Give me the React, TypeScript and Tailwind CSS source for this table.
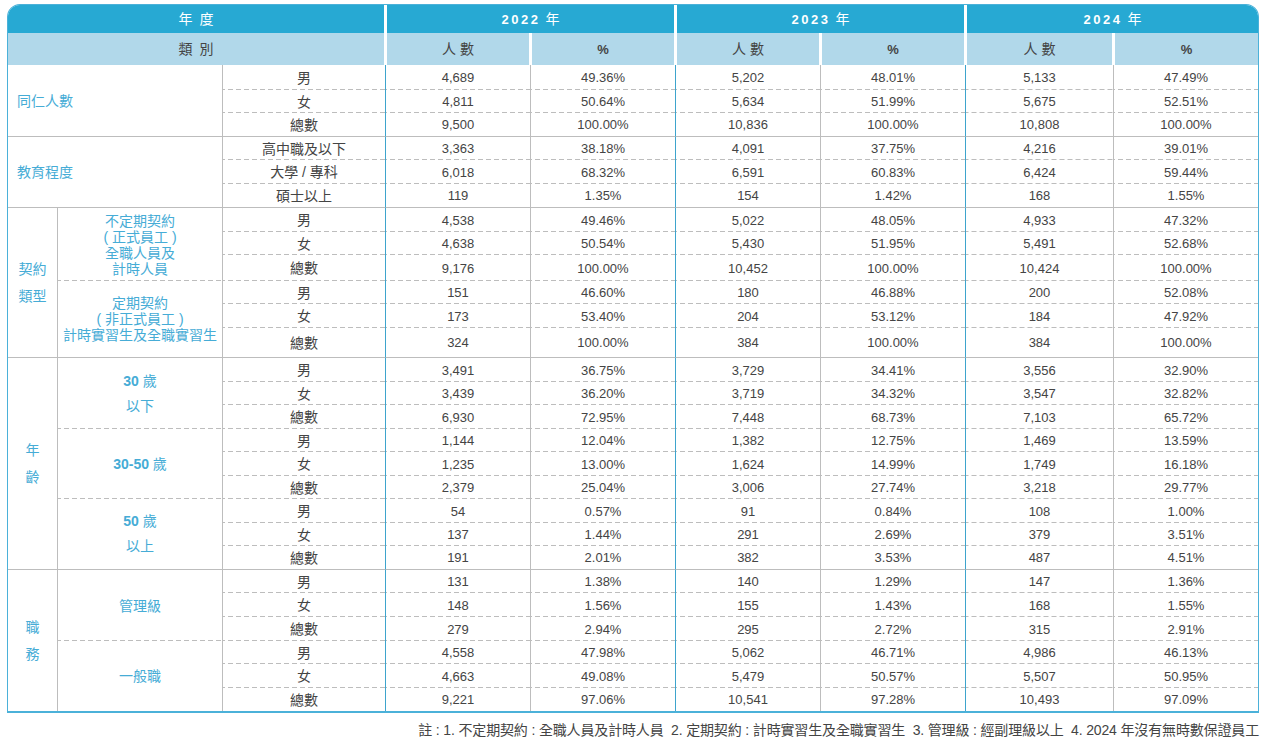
import React from 'react';

type Row = [string, string, string, string, string, string, string];
interface Block { label?: React.ReactNode; rows: Row[] }
interface Section { label: React.ReactNode; wide?: boolean; blocks: Block[] }

const sections: Section[] = [
  {
    label: '同仁人數',
    wide: true,
    blocks: [
      {
        rows: [
          ['男', '4,689', '49.36%', '5,202', '48.01%', '5,133', '47.49%'],
          ['女', '4,811', '50.64%', '5,634', '51.99%', '5,675', '52.51%'],
          ['總數', '9,500', '100.00%', '10,836', '100.00%', '10,808', '100.00%'],
        ],
      },
    ],
  },
  {
    label: '教育程度',
    wide: true,
    blocks: [
      {
        rows: [
          ['高中職及以下', '3,363', '38.18%', '4,091', '37.75%', '4,216', '39.01%'],
          ['大學 / 專科', '6,018', '68.32%', '6,591', '60.83%', '6,424', '59.44%'],
          ['碩士以上', '119', '1.35%', '154', '1.42%', '168', '1.55%'],
        ],
      },
    ],
  },
  {
    label: (
      <>
        契約
        <br />
        類型
      </>
    ),
    blocks: [
      {
        label: (
          <div className="leading-[16px]">
            不定期契約
            <br />( 正式員工 )
            <br />
            全職人員及
            <br />
            計時人員
          </div>
        ),
        rows: [
          ['男', '4,538', '49.46%', '5,022', '48.05%', '4,933', '47.32%'],
          ['女', '4,638', '50.54%', '5,430', '51.95%', '5,491', '52.68%'],
          ['總數', '9,176', '100.00%', '10,452', '100.00%', '10,424', '100.00%'],
        ],
      },
      {
        label: (
          <div className="leading-[16px]">
            定期契約
            <br />( 非正式員工 )
            <br />
            計時實習生及全職實習生
          </div>
        ),
        rows: [
          ['男', '151', '46.60%', '180', '46.88%', '200', '52.08%'],
          ['女', '173', '53.40%', '204', '53.12%', '184', '47.92%'],
          ['總數', '324', '100.00%', '384', '100.00%', '384', '100.00%'],
        ],
      },
    ],
  },
  {
    label: (
      <>
        年
        <br />
        齡
      </>
    ),
    blocks: [
      {
        label: (
          <div className="leading-[25px]">
            <span className="font-bold">30</span> 歲
            <br />
            以下
          </div>
        ),
        rows: [
          ['男', '3,491', '36.75%', '3,729', '34.41%', '3,556', '32.90%'],
          ['女', '3,439', '36.20%', '3,719', '34.32%', '3,547', '32.82%'],
          ['總數', '6,930', '72.95%', '7,448', '68.73%', '7,103', '65.72%'],
        ],
      },
      {
        label: (
          <div>
            <span className="font-bold">30-50</span> 歲
          </div>
        ),
        rows: [
          ['男', '1,144', '12.04%', '1,382', '12.75%', '1,469', '13.59%'],
          ['女', '1,235', '13.00%', '1,624', '14.99%', '1,749', '16.18%'],
          ['總數', '2,379', '25.04%', '3,006', '27.74%', '3,218', '29.77%'],
        ],
      },
      {
        label: (
          <div className="leading-[25px]">
            <span className="font-bold">50</span> 歲
            <br />
            以上
          </div>
        ),
        rows: [
          ['男', '54', '0.57%', '91', '0.84%', '108', '1.00%'],
          ['女', '137', '1.44%', '291', '2.69%', '379', '3.51%'],
          ['總數', '191', '2.01%', '382', '3.53%', '487', '4.51%'],
        ],
      },
    ],
  },
  {
    label: (
      <>
        職
        <br />
        務
      </>
    ),
    blocks: [
      {
        label: '管理級',
        rows: [
          ['男', '131', '1.38%', '140', '1.29%', '147', '1.36%'],
          ['女', '148', '1.56%', '155', '1.43%', '168', '1.55%'],
          ['總數', '279', '2.94%', '295', '2.72%', '315', '2.91%'],
        ],
      },
      {
        label: '一般職',
        rows: [
          ['男', '4,558', '47.98%', '5,062', '46.71%', '4,986', '46.13%'],
          ['女', '4,663', '49.08%', '5,479', '50.57%', '5,507', '50.95%'],
          ['總數', '9,221', '97.06%', '10,541', '97.28%', '10,493', '97.09%'],
        ],
      },
    ],
  },
];

// right borders of the six data columns: blue at each year boundary
const rightCls = [
  'border-r border-r-[#bdbdbd]',
  'border-r border-r-[#3ea4cd]',
  'border-r border-r-[#bdbdbd]',
  'border-r border-r-[#3ea4cd]',
  'border-r border-r-[#bdbdbd]',
  '',
];

const dashed =
  'bg-[linear-gradient(to_right,#bdbdbd_5px,transparent_5px)] bg-[length:8px_1px] bg-bottom bg-repeat-x';
const solid = 'border-b border-b-[#bdbdbd]';

type Edge = 'dash' | 'solid' | 'none';
const bottomCls = (e: Edge) => (e === 'dash' ? dashed : e === 'solid' ? solid : '');

const spanCls: Record<number, string> = { 3: 'row-span-3', 6: 'row-span-6', 9: 'row-span-9' };

export default function App() {
  const cells: React.ReactNode[] = [];

  sections.forEach((sec, si) => {
    const secEnd: Edge = si === sections.length - 1 ? 'none' : 'solid';
    const total = sec.blocks.reduce((n, b) => n + b.rows.length, 0);

    sec.blocks.forEach((blk, bi) => {
      const lastBlk = bi === sec.blocks.length - 1;
      const blkEnd: Edge = lastBlk ? secEnd : 'dash';

      blk.rows.forEach((row, ri) => {
        const lastRow = ri === blk.rows.length - 1;
        const edge: Edge = lastRow ? blkEnd : 'dash';

        if (bi === 0 && ri === 0) {
          if (sec.wide) {
            cells.push(
              <div
                key={`s${si}`}
                className={`col-span-2 row-span-3 flex items-center pl-[9px] text-[14px] text-[#46acd6] border-r border-r-[#bdbdbd] ${bottomCls(secEnd)}`}
              >
                {sec.label}
              </div>
            );
          } else {
            cells.push(
              <div
                key={`s${si}`}
                className={`${spanCls[total]} flex items-center justify-center text-center leading-[27px] text-[14px] text-[#46acd6] border-r border-r-[#bdbdbd] ${bottomCls(secEnd)}`}
              >
                <div>{sec.label}</div>
              </div>
            );
          }
        }

        if (!sec.wide && ri === 0) {
          cells.push(
            <div
              key={`b${si}-${bi}`}
              className={`row-span-3 flex items-center justify-center text-center text-[14px] text-[#46acd6] border-r border-r-[#bdbdbd] ${bottomCls(blkEnd)}`}
            >
              {blk.label}
            </div>
          );
        }

        cells.push(
          <div
            key={`g${si}-${bi}-${ri}`}
            className={`flex items-center justify-center text-[14px] text-[#444] border-r border-r-[#3ea4cd] ${bottomCls(edge)}`}
          >
            {row[0]}
          </div>
        );

        row.slice(1).forEach((v, j) => {
          cells.push(
            <div
              key={`d${si}-${bi}-${ri}-${j}`}
              className={`flex items-center justify-center text-[13px] text-[#444] ${rightCls[j]} ${bottomCls(edge)}`}
            >
              {v}
            </div>
          );
        });
      });
    });
  });

  return (
    <div className="min-h-screen bg-white pt-[4px] pl-[7px] font-['Liberation_Sans','Noto_Sans_CJK_TC',sans-serif] leading-none">
      <div className="w-[1252px] border border-b-2 border-[#4bb1d9] rounded-t-[13px] overflow-hidden">
        <div className="grid grid-cols-[50px_165px_163px_145px_145px_145px_145px_148px_144px] grid-rows-[28px_32px_25px_23px_24px_23px_24px_24px_24px_23px_26px_23px_24px_30px_24px_23px_24px_23px_24px_23px_24px_23px_24px_23px_24px_24px_23px_24px_23px]">
          {/* Header row 1 */}
          <div className="col-span-3 flex items-center justify-center bg-[#27a9d3] text-white text-[14px] border-r-2 border-white">
            <span>年</span>
            <span className="ml-[7px]">度</span>
          </div>
          {['2022', '2023', '2024'].map((y, i) => (
            <div
              key={y}
              className={`col-span-2 flex items-center justify-center bg-[#27a9d3] text-white border-l border-l-white ${i < 2 ? 'border-r-2 border-r-white' : ''}`}
            >
              <span className="font-bold text-[13px] tracking-[2.5px]">{y}</span>
              <span className="text-[14px] ml-[5px]">年</span>
            </div>
          ))}

          {/* Header row 2 */}
          <div className="col-span-3 flex items-center justify-center bg-[#b1d8ea] text-[#444] text-[14px] border-r-2 border-white">
            <span>類</span>
            <span className="ml-[7px]">別</span>
          </div>
          {[0, 1, 2].map((i) => (
            <React.Fragment key={i}>
              <div className="flex items-center justify-center bg-[#b1d8ea] text-[#444] text-[14px] border-l border-l-white border-r-2 border-r-white">
                <span>人</span>
                <span className="ml-[4px]">數</span>
              </div>
              <div
                className={`flex items-center justify-center bg-[#b1d8ea] text-[#444] text-[13px] font-bold border-l border-l-white ${i < 2 ? 'border-r-2 border-r-white' : ''}`}
              >
                %
              </div>
            </React.Fragment>
          ))}

          {cells}
        </div>
      </div>

      <p className="w-[1252px] mt-[8px] text-right text-[14px] tracking-[-0.15px] leading-[18px] text-[#444]">
        註 : 1. 不定期契約 : 全職人員及計時人員{'\u00a0\u00a0'}2. 定期契約 : 計時實習生及全職實習生{'\u00a0\u00a0'}3. 管理級 : 經副理級以上{'\u00a0\u00a0'}4. 2024 年沒有無時數保證員工
      </p>
    </div>
  );
}
